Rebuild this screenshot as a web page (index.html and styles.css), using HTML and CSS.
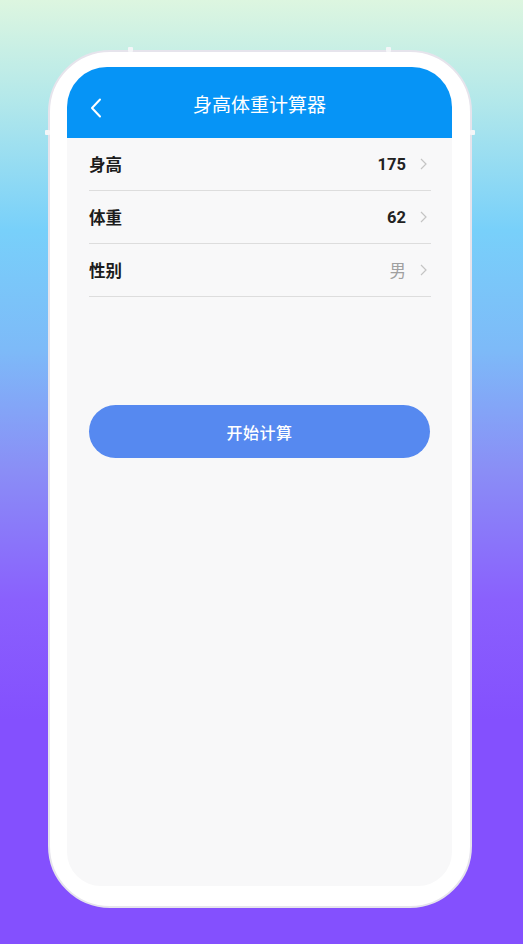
FILE: index.html
```html
<!DOCTYPE html>
<html lang="zh-CN">
<head>
<meta charset="utf-8">
<title>身高体重计算器</title>
<link rel="stylesheet" href="styles.css">
</head>
<body>
<div class="page">
  <div class="phone">
    <span class="btn-mark top-left"></span>
    <span class="btn-mark top-right"></span>
    <span class="btn-mark side-left"></span>
    <span class="btn-mark side-right"></span>
    <div class="screen">
      <header class="header">
        <svg class="back" width="12" height="20" viewBox="0 0 12 20" aria-hidden="true">
          <path d="M10 1.5 L2 10 L10 18.5" fill="none" stroke="#fff" stroke-width="2" stroke-linecap="round" stroke-linejoin="round"/>
        </svg>
        <h1 class="title">身高体重计算器</h1>
      </header>
      <div class="list">
        <div class="row">
          <span class="label">身高</span>
          <span class="value">175</span>
          <svg class="chev" width="7" height="12" viewBox="0 0 7 12" aria-hidden="true"><path d="M1 1 L6 6 L1 11" fill="none" stroke="#c4c4c4" stroke-width="1.2"/></svg>
        </div>
        <div class="row">
          <span class="label">体重</span>
          <span class="value">62</span>
          <svg class="chev" width="7" height="12" viewBox="0 0 7 12" aria-hidden="true"><path d="M1 1 L6 6 L1 11" fill="none" stroke="#c4c4c4" stroke-width="1.2"/></svg>
        </div>
        <div class="row">
          <span class="label">性别</span>
          <span class="value muted">男</span>
          <svg class="chev" width="7" height="12" viewBox="0 0 7 12" aria-hidden="true"><path d="M1 1 L6 6 L1 11" fill="none" stroke="#c4c4c4" stroke-width="1.2"/></svg>
        </div>
      </div>
      <button class="calc" type="button">开始计算</button>
    </div>
  </div>
</div>
</body>
</html>
```

FILE: styles.css
```css
* { box-sizing: border-box; }
html, body {
  margin: 0;
  padding: 0;
}
body {
  width: 523px;
  height: 944px;
  overflow: hidden;
  font-family: "Noto Sans CJK SC", "Noto Sans", sans-serif;
  background: linear-gradient(180deg,
    #ddf6e0 0px,
    #b3e8ea 100px,
    #78d0fa 230px,
    #7dbaf8 350px,
    #8a8ef6 470px,
    #8a60fd 600px,
    #8450fe 720px,
    #8450fe 944px);
}
.page {
  padding: 50px 0 0 48px;
}
.phone {
  position: relative;
  width: 424px;
  height: 858px;
  background: #ffffff;
  border: 2px solid #e6e4ec;
  border-radius: 62px;
  padding: 15px 18px 20px 17px;
}
.btn-mark {
  position: absolute;
  background: #f4f6f8;
  border-radius: 1px;
}
.btn-mark.top-left { top: -5px; left: 78px; width: 5px; height: 5px; }
.btn-mark.top-right { top: -5px; left: 336px; width: 5px; height: 5px; }
.btn-mark.side-left { top: 78px; left: -5px; width: 5px; height: 5px; }
.btn-mark.side-right { top: 78px; right: -5px; width: 5px; height: 5px; }
.screen {
  height: 100%;
  background: #f8f8f9;
  border-radius: 40px 40px 34px 34px;
  overflow: hidden;
  display: flex;
  flex-direction: column;
}
.header {
  position: relative;
  height: 71px;
  flex: none;
  background: #0694f6;
  display: flex;
  align-items: center;
  justify-content: center;
}
.back {
  position: absolute;
  left: 23px;
  top: 31px;
}
.title {
  margin: 0;
  color: #ffffff;
  font-size: 19px;
  font-weight: 400;
  letter-spacing: 0;
  padding-top: 2px;
}
.list {
  padding: 0 21px 0 22px;
}
.row {
  height: 53px;
  display: flex;
  align-items: center;
  border-bottom: 1px solid #dddddd;
  padding-right: 4px;
}
.label {
  flex: 1;
  font-size: 16.5px;
  font-weight: 700;
  color: #1c1c1c;
}
.value {
  font-family: Roboto, "Noto Sans CJK SC", sans-serif;
  font-size: 16.5px;
  font-weight: 700;
  color: #222222;
  margin-right: 14px;
}
.value.muted {
  font-family: "Noto Sans CJK SC", sans-serif;
  font-weight: 400;
  color: #a0a0a0;
}
.chev {
  display: block;
}
.calc {
  margin: 108px 22px 0 22px;
  height: 53px;
  border: none;
  border-radius: 27px;
  background: #5689f0;
  color: #ffffff;
  font-family: "Noto Sans CJK SC", sans-serif;
  font-size: 16px;
  font-weight: 500;
  letter-spacing: 0.5px;
}
```
